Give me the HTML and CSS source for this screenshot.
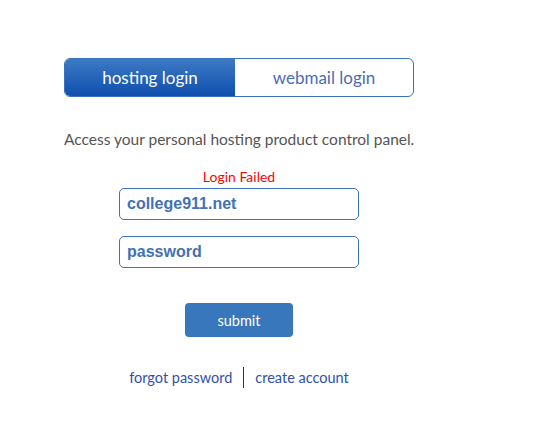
FILE: index.html
```html
<!DOCTYPE html>
<html lang="en">
<head>
    <meta charset="UTF-8">
    <meta name="viewport" content="width=device-width, initial-scale=1.0">
    <title>Login</title>
    <link rel="stylesheet" href="styles.css">
</head>
<body>
    <div class="login-box">
        <div class="tabs">
            <a class="tab active" href="#">hosting login</a>
            <a class="tab" href="#">webmail login</a>
        </div>

        <p class="intro">Access your personal hosting product control panel.</p>

        <form class="login-form">
            <div class="error">Login Failed</div>
            <input class="field" type="text" value="college911.net">
            <input class="field" type="text" value="password">
            <button class="submit" type="button">submit</button>
        </form>

        <div class="links">
            <a href="#">forgot password</a>
            <span class="sep"></span>
            <a href="#">create account</a>
        </div>
    </div>
</body>
</html>
```

FILE: styles.css
```css
body {
    margin: 0;
    background: #fff;
    font-family: Lato, "Open Sans", sans-serif;
}
.login-box {
    width: 350px;
    margin: 58px 0 0 64px;
}
.tabs {
    display: flex;
    height: 39px;
    border: 1px solid #3a72be;
    border-radius: 6px;
    overflow: hidden;
    box-sizing: border-box;
}
.tab {
    flex: 0 0 auto;
    display: flex;
    align-items: center;
    justify-content: center;
    font-size: 17px;
    text-decoration: none;
    color: #4a6cb2;
}
.tab:first-child {
    width: 170px;
}
.tab:last-child {
    flex: 1;
}
.tab.active {
    background: linear-gradient(#3c7ac4, #0f4fae);
    color: #fff;
}
.intro {
    margin: 33px 0 0;
    font-size: 15.5px;
    white-space: nowrap;
    color: #555;
}
.login-form {
    display: flex;
    flex-direction: column;
    align-items: center;
    margin-top: 21px;
}
.error {
    color: #f00;
    font-size: 14px;
    line-height: 16px;
    margin-bottom: 3px;
}
.field {
    width: 240px;
    height: 32px;
    box-sizing: border-box;
    border: 1px solid #3a72be;
    border-radius: 5px;
    padding: 0 7px;
    font-family: "Liberation Sans", Arial, sans-serif;
    font-size: 16px;
    font-weight: bold;
    color: #4272b4;
    margin-bottom: 16px;
}
.submit {
    margin-top: 19px;
    width: 108px;
    height: 34px;
    border: none;
    border-radius: 4px;
    background: #3877bb;
    color: #fff;
    font-family: Lato, sans-serif;
    font-size: 14.5px;
}
.links {
    display: flex;
    justify-content: center;
    align-items: center;
    gap: 11px;
    margin-top: 30px;
    font-size: 14.5px;
}
.links a {
    color: #3150b0;
    text-decoration: none;
}
.sep {
    width: 1px;
    height: 21px;
    background: #333;
}
```
